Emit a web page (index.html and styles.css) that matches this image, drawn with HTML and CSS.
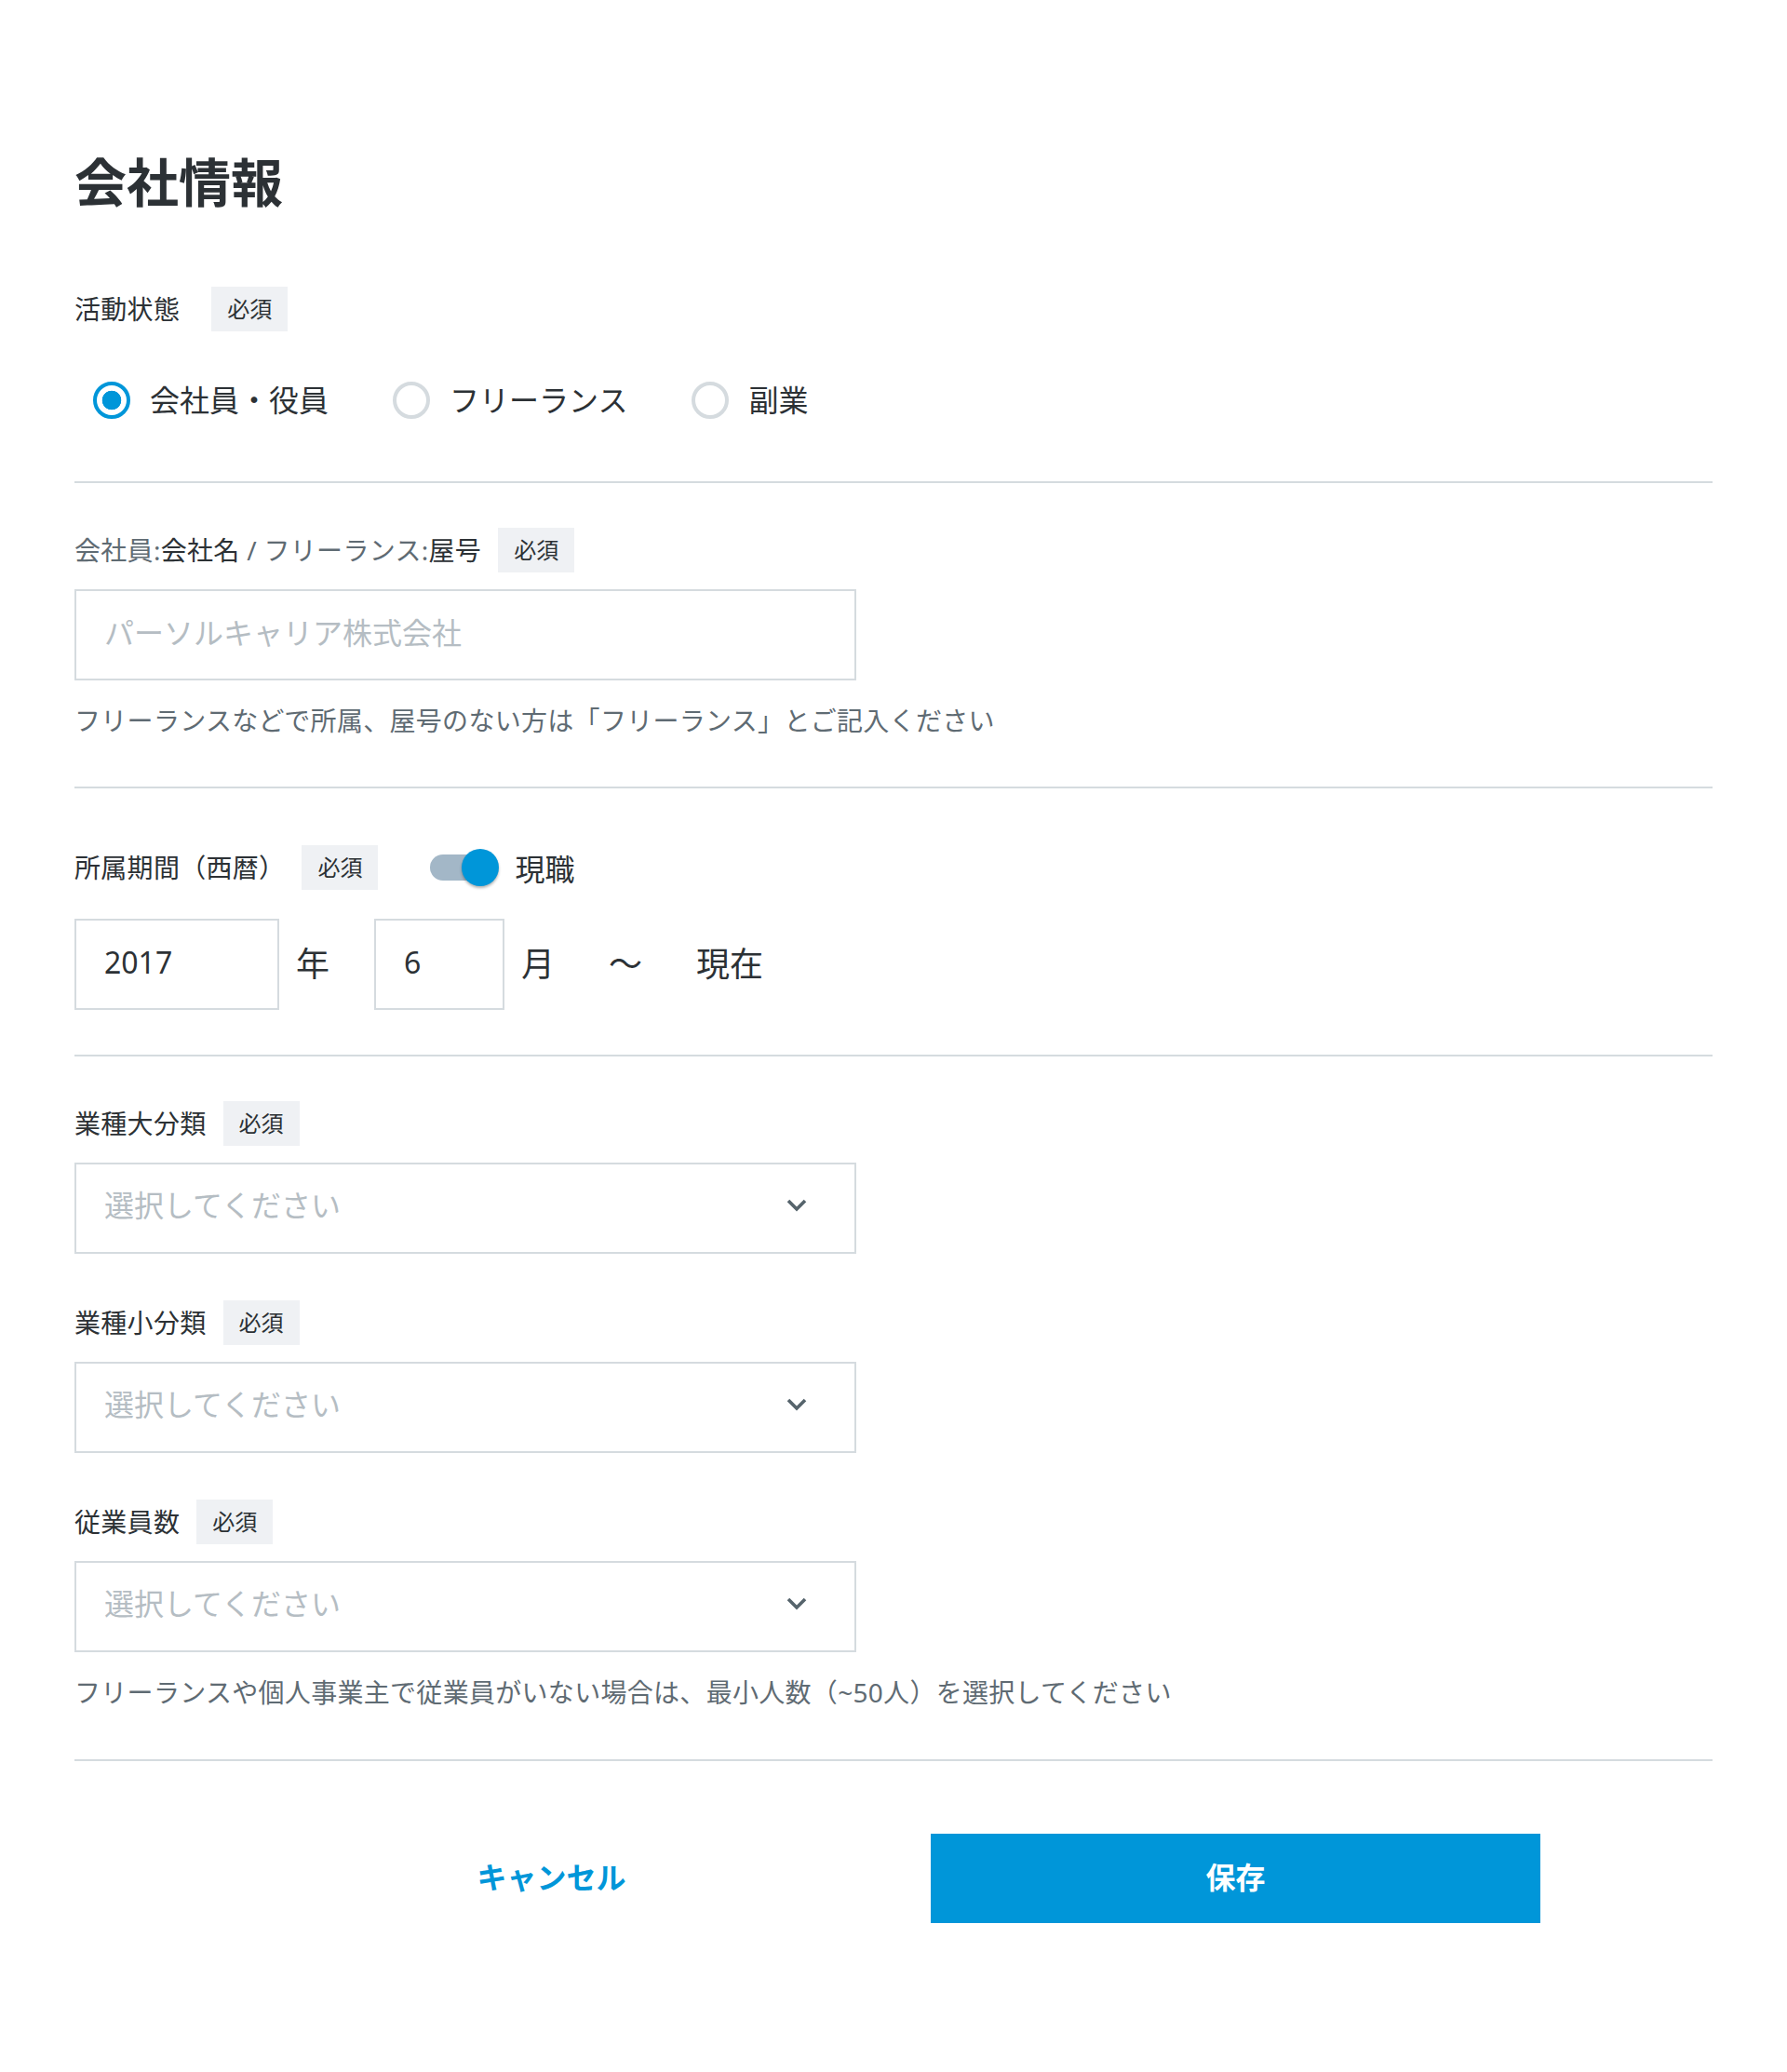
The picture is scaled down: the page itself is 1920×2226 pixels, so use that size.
FILE: index.html
```html
<!DOCTYPE html>
<html lang="ja">
<head>
    <meta charset="UTF-8">
    <meta name="viewport" content="width=device-width, initial-scale=1.0">
    <title>会社情報</title>
    <link rel="stylesheet" href="styles.css">
</head>
<body>
    <main class="page">
        <h1 class="page-title">会社情報</h1>

        <section class="section section-status">
            <div class="field-head field-head-wide">
                <span class="field-label">活動状態</span>
                <span class="badge">必須</span>
            </div>
            <div class="radio-group">
                <label class="radio"><input type="radio" name="status" checked><span>会社員・役員</span></label>
                <label class="radio"><input type="radio" name="status"><span>フリーランス</span></label>
                <label class="radio"><input type="radio" name="status"><span>副業</span></label>
            </div>
        </section>

        <section class="section section-company">
            <div class="field-head">
                <label class="field-label" for="company"><span class="muted">会社員:</span>会社名<span class="muted"> / フリーランス:</span>屋号</label>
                <span class="badge">必須</span>
            </div>
            <input class="text-input" type="text" id="company" placeholder="パーソルキャリア株式会社">
            <p class="help">フリーランスなどで所属、屋号のない方は「フリーランス」とご記入ください</p>
        </section>

        <section class="section section-period">
            <div class="field-head period-head">
                <span class="field-label">所属期間（西暦）</span>
                <span class="badge">必須</span>
                <span class="toggle"><span class="toggle-knob"></span></span>
                <span class="toggle-text">現職</span>
            </div>
            <div class="date-row">
                <input class="text-input date-year" type="text" value="2017">
                <span class="unit unit-year">年</span>
                <input class="text-input date-month" type="text" value="6">
                <span class="unit unit-month">月</span>
                <span class="unit unit-wave">〜</span>
                <span class="unit unit-now">現在</span>
            </div>
        </section>

        <section class="section section-industry">
            <div class="field">
                <div class="field-head">
                    <span class="field-label">業種大分類</span>
                    <span class="badge">必須</span>
                </div>
                <div class="select">
                    <span>選択してください</span>
                    <svg class="chevron" width="22" height="14" viewBox="0 0 22 14"><path d="M2 2 L11 11 L20 2" fill="none" stroke="#56646c" stroke-width="3.6"/></svg>
                </div>
            </div>
            <div class="field">
                <div class="field-head">
                    <span class="field-label">業種小分類</span>
                    <span class="badge">必須</span>
                </div>
                <div class="select">
                    <span>選択してください</span>
                    <svg class="chevron" width="22" height="14" viewBox="0 0 22 14"><path d="M2 2 L11 11 L20 2" fill="none" stroke="#56646c" stroke-width="3.6"/></svg>
                </div>
            </div>
            <div class="field">
                <div class="field-head">
                    <span class="field-label">従業員数</span>
                    <span class="badge">必須</span>
                </div>
                <div class="select">
                    <span>選択してください</span>
                    <svg class="chevron" width="22" height="14" viewBox="0 0 22 14"><path d="M2 2 L11 11 L20 2" fill="none" stroke="#56646c" stroke-width="3.6"/></svg>
                </div>
                <p class="help">フリーランスや個人事業主で従業員がいない場合は、最小人数（~50人）を選択してください</p>
            </div>
        </section>

        <div class="actions">
            <button type="button" class="btn btn-cancel">キャンセル</button>
            <button type="submit" class="btn btn-save">保存</button>
        </div>
    </main>
</body>
</html>
```

FILE: styles.css
```css
body {
    margin: 0;
    font-family: "Noto Sans", "Noto Sans CJK JP", sans-serif;
    color: #2c3135;
    background-color: #ffffff;
}

.page {
    box-sizing: border-box;
    min-height: 2226px;
    padding: 167px 80px 0;
}

.page-title {
    margin: 0;
    font-size: 56px;
    line-height: 56px;
    font-weight: 700;
}

/* sections split by grey rules */
.section {
    padding: 48px 0;
    border-bottom: 2px solid #d5dbdf;
}

.section-status {
    padding-top: 85px;
    padding-bottom: 67px;
}

.section-company {
    padding-bottom: 57px;
}

.section-industry {
    padding-bottom: 58px;
}

.field-head {
    display: flex;
    align-items: center;
    gap: 18px;
    height: 48px;
}

.field-head-wide {
    gap: 34px;
}

.period-head {
    height: 74px;
}

.field-label {
    font-size: 28px;
    line-height: 48px;
    letter-spacing: 0.3px;
    white-space: nowrap;
}

.muted {
    color: #5f6b73;
}

.badge {
    height: 48px;
    line-height: 48px;
    padding: 0 17px;
    background-color: #eff1f4;
    font-size: 24px;
    color: #2c3135;
}

/* radios */
.radio-group {
    display: flex;
    align-items: center;
    gap: 69px;
    margin-top: 54px;
    padding-left: 20px;
}

.radio {
    display: flex;
    align-items: center;
    gap: 21px;
    font-size: 32px;
    line-height: 40px;
}

.radio input {
    appearance: none;
    -webkit-appearance: none;
    box-sizing: border-box;
    width: 40px;
    height: 40px;
    margin: 0;
    border: 4px solid #d5dbdf;
    border-radius: 50%;
    background-color: #ffffff;
}

.radio input:checked {
    border-color: #0096d9;
    background: radial-gradient(circle, #0096d9 10px, #ffffff 10.6px);
}

/* inputs */
.text-input {
    display: block;
    box-sizing: border-box;
    width: 840px;
    height: 98px;
    margin: 18px 0 0;
    padding: 0 30px 6px;
    border: 2px solid #d5dbdf;
    border-radius: 0;
    font: inherit;
    font-size: 32px;
    line-height: 32px;
    color: #2c3135;
    outline: none;
}

.text-input::placeholder {
    color: #b5bdc3;
}

.help {
    margin: 29px 0 0;
    font-size: 28px;
    line-height: 28px;
    letter-spacing: 0.3px;
    color: #5f6b73;
}

/* toggle */
.toggle {
    position: relative;
    width: 68px;
    height: 28px;
    margin-left: 38px;
    border-radius: 14px;
    background-color: #a3b7c7;
}

.toggle-knob {
    position: absolute;
    left: 34px;
    top: -6px;
    width: 40px;
    height: 40px;
    border-radius: 50%;
    background-color: #0096d9;
    box-shadow: 0 2px 3px rgba(0, 0, 0, 0.3);
}

.toggle-text {
    margin-left: 5px;
    font-size: 32px;
}

/* period row */
.date-row {
    display: flex;
    align-items: center;
    margin-top: 18px;
}

.date-row .text-input {
    margin-top: 0;
}

.date-year {
    width: 220px !important;
}

.date-month {
    width: 140px !important;
    margin-left: 48px !important;
}

.unit {
    font-size: 36px;
    line-height: 98px;
}

.unit-year,
.unit-month {
    margin-left: 18px;
}

.unit-wave,
.unit-now {
    margin-left: 58px;
}

/* selects */
.field + .field {
    margin-top: 50px;
}

.select {
    display: flex;
    align-items: center;
    justify-content: space-between;
    box-sizing: border-box;
    width: 840px;
    height: 98px;
    margin-top: 18px;
    padding: 0 51px 6px 30px;
    border: 2px solid #d5dbdf;
    font-size: 32px;
    line-height: 32px;
    color: #b5bdc3;
    cursor: pointer;
}

/* buttons */
.actions {
    display: flex;
    justify-content: center;
    gap: 80px;
    padding-top: 78px;
}

.btn {
    width: 655px;
    height: 96px;
    padding: 0 0 3px;
    border: none;
    border-radius: 0;
    font: inherit;
    font-size: 32px;
    line-height: 32px;
    font-weight: 700;
    cursor: pointer;
}

.btn-cancel {
    background: none;
    color: #0096d9;
}

.btn-save {
    background-color: #0096d9;
    color: #ffffff;
}
```
